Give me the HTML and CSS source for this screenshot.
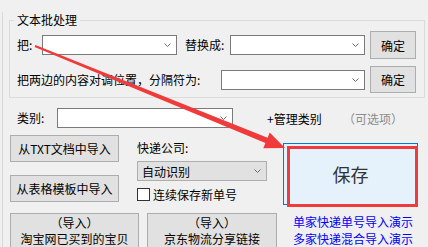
FILE: index.html
```html
<!DOCTYPE html>
<html>
<head>
  <meta charset="utf-8" />
  <title>文本批处理</title>
  <link rel="stylesheet" href="styles.css">
</head>
<body>
  <div class="window">
    <!-- 文本批处理 -->
    <fieldset class="batch">
      <legend>文本批处理</legend>
      <div class="batch-row">
        <span class="lbl lbl-ba">把:</span>
        <div class="combo combo-a"><svg class="chev" width="7" height="4" viewBox="0 0 7 4"><polyline points="0.5,0.5 3.5,3.5 6.5,0.5" /></svg></div>
        <span class="lbl lbl-replace">替换成:</span>
        <div class="combo combo-a"><svg class="chev" width="7" height="4" viewBox="0 0 7 4"><polyline points="0.5,0.5 3.5,3.5 6.5,0.5" /></svg></div>
        <button class="btn btn-ok">确定</button>
      </div>
      <div class="batch-row row-swap">
        <span class="lbl lbl-swap">把两边的内容对调位置，分隔符为:</span>
        <div class="combo combo-b"><svg class="chev" width="7" height="4" viewBox="0 0 7 4"><polyline points="0.5,0.5 3.5,3.5 6.5,0.5" /></svg></div>
        <button class="btn btn-ok btn-ok2">确定</button>
      </div>
    </fieldset>

    <!-- 类别 -->
    <div class="category-row">
      <span class="lbl lbl-cat">类别:</span>
      <div class="combo combo-cat"><svg class="chev" width="7" height="4" viewBox="0 0 7 4"><polyline points="0.5,0.5 3.5,3.5 6.5,0.5" /></svg></div>
      <span class="manage">+管理类别</span>
      <span class="optional">（可选项）</span>
    </div>

    <div class="main">
      <div class="left">
        <div class="left-top">
          <div class="import-col">
            <button class="btn btn-import">从TXT文档中导入</button>
            <button class="btn btn-import">从表格模板中导入</button>
          </div>
          <div class="express-col">
            <span class="lbl lbl-express">快递公司:</span>
            <div class="combo combo-express">
              <span class="combo-text">自动识别</span>
              <svg class="chev" width="7" height="4" viewBox="0 0 7 4"><polyline points="0.5,0.5 3.5,3.5 6.5,0.5" /></svg>
            </div>
            <label class="check-row"><span class="checkbox"></span>连续保存新单号</label>
          </div>
        </div>
        <div class="bottom-btns">
          <button class="btn btn-big btn-taobao">（导入）<br>淘宝网已买到的宝贝</button>
          <button class="btn btn-big btn-jd">（导入）<br>京东物流分享链接</button>
        </div>
      </div>

      <div class="right">
        <div class="save-wrap">
          <button class="save">保存</button>
          <div class="mark"></div>
        </div>
        <div class="links">
          <a href="#">单家快递单号导入演示</a>
          <a href="#">多家快递混合导入演示</a>
        </div>
      </div>
    </div>
  </div>

  <!-- 标注箭头 -->
  <svg class="arrow" width="428" height="247" viewBox="0 0 428 247">
    <polygon points="35.4,45.1 267.6,137.8 269.7,132.5 285,148 263.3,148.3 265.4,143 34.6,46.9" />
  </svg>
</body>
</html>
```

FILE: styles.css
```css
/* Grundlayout */
html, body {
  margin: 0;
  padding: 0;
}

body {
  position: relative;
  width: 428px;
  height: 247px;
  overflow: hidden;
  background: #f0f0f0;
  font-family: "Noto Sans CJK SC", "Microsoft YaHei", sans-serif;
  font-size: 12px;
  color: #000;
}

.window {
  margin-left: 2px;
  height: 247px;
  border-left: 1px solid #d9d9d9;
  box-sizing: border-box;
}

/* Gruppe: 文本批处理 */
.batch {
  margin: 12px 0 0 6px;
  padding: 3px 7px 4px 7px;
  width: 416px;
  box-sizing: border-box;
  border: 1px solid #dcdcdc;
}

.batch legend {
  margin-left: -3px;
  padding: 0 3px;
  line-height: 16px;
}

.batch-row {
  display: flex;
  align-items: center;
  height: 28px;
}

.batch-row > *,
.category-row > * {
  flex: none;
}

.row-swap {
  margin-top: 7px;
  height: 27px;
}

.lbl {
  line-height: 20px;
  white-space: nowrap;
}

.lbl-ba { width: 25px; }
.lbl-replace { width: 45px; margin-left: 8px; }
.lbl-swap { width: 204px; }

/* Combobox */
.combo {
  display: flex;
  align-items: center;
  justify-content: flex-end;
  height: 20px;
  padding-right: 5px;
  box-sizing: border-box;
  background: #fff;
  border: 1px solid #7a7a7a;
}

.combo-a { width: 135px; }
.combo-b { width: 144px; }

.chev polyline {
  fill: none;
  stroke: #6d6d6d;
  stroke-width: 1;
}

/* Buttons */
.btn {
  margin: 0;
  padding: 0;
  font-family: inherit;
  font-size: 12px;
  color: #000;
  background: #e1e1e1;
  border: 1px solid #adadad;
  box-sizing: border-box;
}

.btn-ok {
  width: 46px;
  height: 28px;
  margin-left: 5px;
}

.btn-ok2 { height: 27px; }

/* Kategorie */
.category-row {
  display: flex;
  align-items: center;
  margin-top: 10px;
  padding-left: 14px;
  height: 20px;
}

.lbl-cat { width: 40px; }
.combo-cat { width: 176px; }

.manage {
  margin-left: 34px;
  width: 76px;
  white-space: nowrap;
}

.optional {
  color: #8c8c8c;
  white-space: nowrap;
}

/* Hauptbereich */
.main {
  display: flex;
  margin-top: 7px;
  padding-left: 7px;
}

.left {
  width: 267px;
}

.left-top {
  display: flex;
}

.import-col {
  display: flex;
  flex-direction: column;
  gap: 13px;
  width: 109px;
}

.btn-import {
  height: 27px;
}

.express-col {
  display: flex;
  flex-direction: column;
  margin-left: 18px;
  padding-top: 3px;
  width: 130px;
}

.combo-express {
  margin-top: 3px;
  justify-content: space-between;
  padding-left: 4px;
  background: #e1e1e1;
  border-color: #adadad;
}

.check-row {
  display: flex;
  align-items: center;
  margin-top: 7px;
  height: 13px;
  line-height: 13px;
}

.checkbox {
  width: 13px;
  height: 13px;
  margin-right: 3px;
  box-sizing: border-box;
  background: #fff;
  border: 1px solid #333;
}

.bottom-btns {
  display: flex;
  gap: 8px;
  margin-top: 11px;
}

.btn-big {
  height: 36px;
  line-height: 16px;
  padding: 0;
}

.btn-taobao { width: 129px; }
.btn-jd { width: 130px; }

/* Speichern */
.right {
  margin-left: 6px;
  padding-top: 8px;
  width: 136px;
}

.save-wrap {
  position: relative;
  width: 135px;
  height: 62px;
}

.save {
  width: 135px;
  height: 62px;
  margin: 0;
  padding: 0;
  font-family: inherit;
  font-size: 18px;
  color: #333;
  background: #e5f1fb;
  border: 1px solid #0078d7;
}

.mark {
  position: absolute;
  left: 4px;
  top: 3px;
  width: 131px;
  height: 61px;
  box-sizing: border-box;
  border: 3px solid #ef3b3b;
}

.links {
  display: flex;
  flex-direction: column;
  margin-top: 8px;
  padding-left: 10px;
  line-height: 17px;
}

.links a {
  color: #0000ff;
  text-decoration: none;
  white-space: nowrap;
}

/* Pfeil */
.arrow {
  position: absolute;
  left: 0;
  top: 0;
  pointer-events: none;
}

.arrow polygon {
  fill: #ef3b3b;
}
```
